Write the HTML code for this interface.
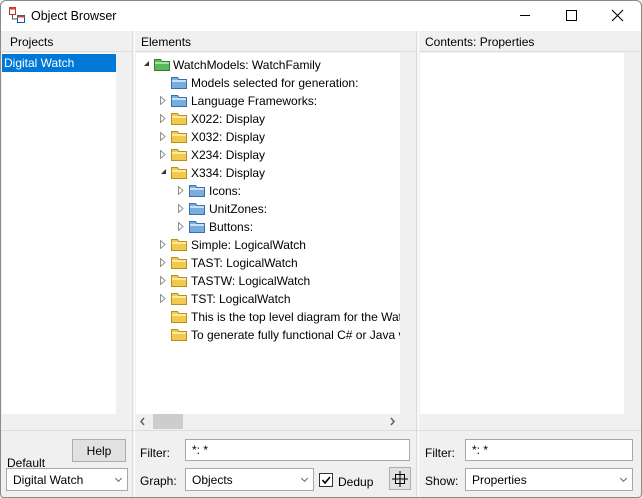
<!DOCTYPE html>
<html><head><style>
*{box-sizing:border-box;margin:0;padding:0}
body{width:642px;height:498px;background:#f0f0f0;font-family:"Liberation Sans",sans-serif;font-size:12px;color:#000;position:relative;overflow:hidden}
.a{position:absolute}
.win{left:0;top:0;width:642px;height:498px;border:1px solid #8a8a8a;border-radius:6px 6px 4px 4px;background:#f0f0f0}
.tb{left:1px;top:1px;width:640px;height:30px;background:#fff;border-radius:6px 6px 0 0}
.hdr{font-size:12px;height:21px;line-height:22px;padding-left:9px;border-bottom:1px solid #dcdcdc}
.white{background:#fff}
.row{position:absolute;height:18px;line-height:18px;white-space:nowrap}
.arr{position:absolute;top:5px;width:6px;height:9px}
.arrx{position:absolute;width:0;height:0;border-left:5px solid transparent;border-bottom:5px solid #333}
.fold{position:absolute;top:3px;width:16px;height:13px}
.inp{background:#fff;border:1px solid #a8a8a8;height:22px;line-height:20px;padding-left:6px}
.sel{background:#fff;border:1px solid #a8a8a8;height:23px;line-height:21px;padding-left:6px}
.sel:after{content:"";position:absolute;right:6px;top:7px;width:4px;height:4px;border-right:1.5px solid #666;border-bottom:1.5px solid #666;transform:rotate(45deg)}
.btn{background:#e1e1e1;border:1px solid #adadad;text-align:center}
</style></head><body>
<div class="a win"></div>
<div class="a tb"></div>
<svg class="a" style="left:9px;top:7px" width="17" height="17"><rect x="0.5" y="0.5" width="6" height="7" fill="#fff" stroke="#c03030"/><rect x="0.5" y="0.5" width="6" height="2" fill="#d04040"/><rect x="8.5" y="8.5" width="7" height="7" fill="#fff" stroke="#2050a0"/><rect x="8.5" y="8.5" width="7" height="2" fill="#d04040"/><path d="M3.5 8v4h5" stroke="#555" fill="none"/></svg>
<div class="a" style="left:31px;top:9px;font-size:12.5px">Object Browser</div>
<div class="a" style="left:520px;top:15px;width:10px;height:1px;background:#000"></div>
<div class="a" style="left:566px;top:10px;width:11px;height:11px;border:1px solid #000"></div>
<svg class="a" style="left:611px;top:9px" width="13" height="13"><path d="M1 1L12 12M12 1L1 12" stroke="#000" stroke-width="1.1"/></svg>

<div class="a hdr" style="left:1px;top:31px;width:131px">Projects</div>
<div class="a hdr" style="left:135px;top:31px;width:281px;padding-left:6px">Elements</div>
<div class="a hdr" style="left:419px;top:31px;width:221px;padding-left:6px">Contents: Properties</div>
<div class="a" style="left:132px;top:31px;width:3px;height:466px;border-left:1px solid #dcdcdc;border-right:1px solid #fff"></div>
<div class="a" style="left:416px;top:31px;width:3px;height:466px;border-left:1px solid #dcdcdc;border-right:1px solid #fff"></div>
<div class="a" style="left:1px;top:430px;width:640px;height:1px;background:#dcdcdc"></div>

<div class="a white" style="left:2px;top:53px;width:114px;height:361px"></div>
<div class="a" style="left:2px;top:54px;width:114px;height:18px;background:#0078d7;color:#fff;line-height:19px;padding-left:2px">Digital Watch</div>

<div class="a white" style="left:136px;top:53px;width:264px;height:361px;overflow:hidden;line-height:18px">
<div class="row" style="left:0;top:2px;width:300px"><div class="arrx" style="left:8px;top:6px"></div><svg class="fold" style="left:18px" width="16" height="13"><path d="M0.5 1.5h6l1.5 2h7.5v9h-15z" fill="#5cb85c" stroke="#2e7d32"/><rect x="1" y="4" width="14" height="2" fill="#a5e0a5"/></svg><span style="position:absolute;left:37px;top:1px">WatchModels: WatchFamily</span></div>
<div class="row" style="left:0;top:20px;width:300px"><svg class="fold" style="left:35px" width="16" height="13"><path d="M0.5 1.5h6l1.5 2h7.5v9h-15z" fill="#76aee0" stroke="#3a6fa8"/><rect x="1" y="4" width="14" height="2" fill="#c8e2f8"/></svg><span style="position:absolute;left:55px;top:1px">Models selected for generation:</span></div>
<div class="row" style="left:0;top:38px;width:300px"><svg class="arr" style="left:24px"><path d="M0.5 0.5L5 4.5L0.5 8.5z" fill="#fff" stroke="#909090"/></svg><svg class="fold" style="left:35px" width="16" height="13"><path d="M0.5 1.5h6l1.5 2h7.5v9h-15z" fill="#76aee0" stroke="#3a6fa8"/><rect x="1" y="4" width="14" height="2" fill="#c8e2f8"/></svg><span style="position:absolute;left:55px;top:1px">Language Frameworks:</span></div>
<div class="row" style="left:0;top:56px;width:300px"><svg class="arr" style="left:24px"><path d="M0.5 0.5L5 4.5L0.5 8.5z" fill="#fff" stroke="#909090"/></svg><svg class="fold" style="left:35px" width="16" height="13"><path d="M0.5 1.5h6l1.5 2h7.5v9h-15z" fill="#f2c94c" stroke="#b8901a"/><rect x="1" y="4" width="14" height="2" fill="#fbe9a6"/></svg><span style="position:absolute;left:55px;top:1px">X022: Display</span></div>
<div class="row" style="left:0;top:74px;width:300px"><svg class="arr" style="left:24px"><path d="M0.5 0.5L5 4.5L0.5 8.5z" fill="#fff" stroke="#909090"/></svg><svg class="fold" style="left:35px" width="16" height="13"><path d="M0.5 1.5h6l1.5 2h7.5v9h-15z" fill="#f2c94c" stroke="#b8901a"/><rect x="1" y="4" width="14" height="2" fill="#fbe9a6"/></svg><span style="position:absolute;left:55px;top:1px">X032: Display</span></div>
<div class="row" style="left:0;top:92px;width:300px"><svg class="arr" style="left:24px"><path d="M0.5 0.5L5 4.5L0.5 8.5z" fill="#fff" stroke="#909090"/></svg><svg class="fold" style="left:35px" width="16" height="13"><path d="M0.5 1.5h6l1.5 2h7.5v9h-15z" fill="#f2c94c" stroke="#b8901a"/><rect x="1" y="4" width="14" height="2" fill="#fbe9a6"/></svg><span style="position:absolute;left:55px;top:1px">X234: Display</span></div>
<div class="row" style="left:0;top:110px;width:300px"><div class="arrx" style="left:25px;top:6px"></div><svg class="fold" style="left:35px" width="16" height="13"><path d="M0.5 1.5h6l1.5 2h7.5v9h-15z" fill="#f2c94c" stroke="#b8901a"/><rect x="1" y="4" width="14" height="2" fill="#fbe9a6"/></svg><span style="position:absolute;left:55px;top:1px">X334: Display</span></div>
<div class="row" style="left:0;top:128px;width:300px"><svg class="arr" style="left:42px"><path d="M0.5 0.5L5 4.5L0.5 8.5z" fill="#fff" stroke="#909090"/></svg><svg class="fold" style="left:53px" width="16" height="13"><path d="M0.5 1.5h6l1.5 2h7.5v9h-15z" fill="#76aee0" stroke="#3a6fa8"/><rect x="1" y="4" width="14" height="2" fill="#c8e2f8"/></svg><span style="position:absolute;left:73px;top:1px">Icons:</span></div>
<div class="row" style="left:0;top:146px;width:300px"><svg class="arr" style="left:42px"><path d="M0.5 0.5L5 4.5L0.5 8.5z" fill="#fff" stroke="#909090"/></svg><svg class="fold" style="left:53px" width="16" height="13"><path d="M0.5 1.5h6l1.5 2h7.5v9h-15z" fill="#76aee0" stroke="#3a6fa8"/><rect x="1" y="4" width="14" height="2" fill="#c8e2f8"/></svg><span style="position:absolute;left:73px;top:1px">UnitZones:</span></div>
<div class="row" style="left:0;top:164px;width:300px"><svg class="arr" style="left:42px"><path d="M0.5 0.5L5 4.5L0.5 8.5z" fill="#fff" stroke="#909090"/></svg><svg class="fold" style="left:53px" width="16" height="13"><path d="M0.5 1.5h6l1.5 2h7.5v9h-15z" fill="#76aee0" stroke="#3a6fa8"/><rect x="1" y="4" width="14" height="2" fill="#c8e2f8"/></svg><span style="position:absolute;left:73px;top:1px">Buttons:</span></div>
<div class="row" style="left:0;top:182px;width:300px"><svg class="arr" style="left:24px"><path d="M0.5 0.5L5 4.5L0.5 8.5z" fill="#fff" stroke="#909090"/></svg><svg class="fold" style="left:35px" width="16" height="13"><path d="M0.5 1.5h6l1.5 2h7.5v9h-15z" fill="#f2c94c" stroke="#b8901a"/><rect x="1" y="4" width="14" height="2" fill="#fbe9a6"/></svg><span style="position:absolute;left:55px;top:1px">Simple: LogicalWatch</span></div>
<div class="row" style="left:0;top:200px;width:300px"><svg class="arr" style="left:24px"><path d="M0.5 0.5L5 4.5L0.5 8.5z" fill="#fff" stroke="#909090"/></svg><svg class="fold" style="left:35px" width="16" height="13"><path d="M0.5 1.5h6l1.5 2h7.5v9h-15z" fill="#f2c94c" stroke="#b8901a"/><rect x="1" y="4" width="14" height="2" fill="#fbe9a6"/></svg><span style="position:absolute;left:55px;top:1px">TAST: LogicalWatch</span></div>
<div class="row" style="left:0;top:218px;width:300px"><svg class="arr" style="left:24px"><path d="M0.5 0.5L5 4.5L0.5 8.5z" fill="#fff" stroke="#909090"/></svg><svg class="fold" style="left:35px" width="16" height="13"><path d="M0.5 1.5h6l1.5 2h7.5v9h-15z" fill="#f2c94c" stroke="#b8901a"/><rect x="1" y="4" width="14" height="2" fill="#fbe9a6"/></svg><span style="position:absolute;left:55px;top:1px">TASTW: LogicalWatch</span></div>
<div class="row" style="left:0;top:236px;width:300px"><svg class="arr" style="left:24px"><path d="M0.5 0.5L5 4.5L0.5 8.5z" fill="#fff" stroke="#909090"/></svg><svg class="fold" style="left:35px" width="16" height="13"><path d="M0.5 1.5h6l1.5 2h7.5v9h-15z" fill="#f2c94c" stroke="#b8901a"/><rect x="1" y="4" width="14" height="2" fill="#fbe9a6"/></svg><span style="position:absolute;left:55px;top:1px">TST: LogicalWatch</span></div>
<div class="row" style="left:0;top:254px;width:300px"><svg class="fold" style="left:35px" width="16" height="13"><path d="M0.5 1.5h6l1.5 2h7.5v9h-15z" fill="#f2c94c" stroke="#b8901a"/><rect x="1" y="4" width="14" height="2" fill="#fbe9a6"/></svg><span style="position:absolute;left:55px;top:1px">This is the top level diagram for the Watch</span></div>
<div class="row" style="left:0;top:272px;width:300px"><svg class="fold" style="left:35px" width="16" height="13"><path d="M0.5 1.5h6l1.5 2h7.5v9h-15z" fill="#f2c94c" stroke="#b8901a"/><rect x="1" y="4" width="14" height="2" fill="#fbe9a6"/></svg><span style="position:absolute;left:55px;top:1px">To generate fully functional C# or Java ver</span></div>
</div>
<div class="a" style="left:400px;top:53px;width:16px;height:361px;background:#f0f0f0"></div>
<div class="a" style="left:136px;top:414px;width:264px;height:16px;background:#f0f0f0"></div>
<div class="a" style="left:153px;top:414px;width:30px;height:15px;background:#cdcdcd"></div>
<svg class="a" style="left:139px;top:417px" width="8" height="9"><path d="M5 1L2 4.5L5 8" stroke="#606060" stroke-width="1.5" fill="none"/></svg>
<svg class="a" style="left:389px;top:417px" width="8" height="9"><path d="M2 1L5 4.5L2 8" stroke="#606060" stroke-width="1.5" fill="none"/></svg>

<div class="a white" style="left:420px;top:53px;width:204px;height:361px"></div>

<div class="a btn" style="left:72px;top:439px;width:54px;height:23px;line-height:22px">Help</div>
<div class="a" style="left:7px;top:456px">Default</div>
<div class="a sel" style="left:6px;top:468px;width:122px;line-height:22px">Digital Watch</div>

<div class="a" style="left:140px;top:446px">Filter:</div>
<div class="a inp" style="left:185px;top:439px;width:225px">*: *</div>
<div class="a" style="left:140px;top:474px">Graph:</div>
<div class="a sel" style="left:185px;top:468px;width:129px;line-height:22px">Objects</div>
<div class="a" style="left:319px;top:473px;width:14px;height:14px;border:1px solid #333;background:#fff"></div>
<svg class="a" style="left:320px;top:474px" width="12" height="12"><path d="M2.5 6l2.5 3l5-6" stroke="#000" stroke-width="1.6" fill="none"/></svg>
<div class="a" style="left:338px;top:475px">Dedup</div>
<div class="a btn" style="left:389px;top:467px;width:22px;height:23px"></div>
<svg class="a" style="left:392px;top:470px" width="16" height="17"><rect x="3.5" y="4.5" width="9" height="9" fill="none" stroke="#000"/><path d="M8 1v16M0 9h16" stroke="#000"/></svg>

<div class="a" style="left:425px;top:446px">Filter:</div>
<div class="a inp" style="left:465px;top:439px;width:168px">*: *</div>
<div class="a" style="left:425px;top:474px">Show:</div>
<div class="a sel" style="left:465px;top:468px;width:168px;line-height:22px">Properties</div>
</body></html>
